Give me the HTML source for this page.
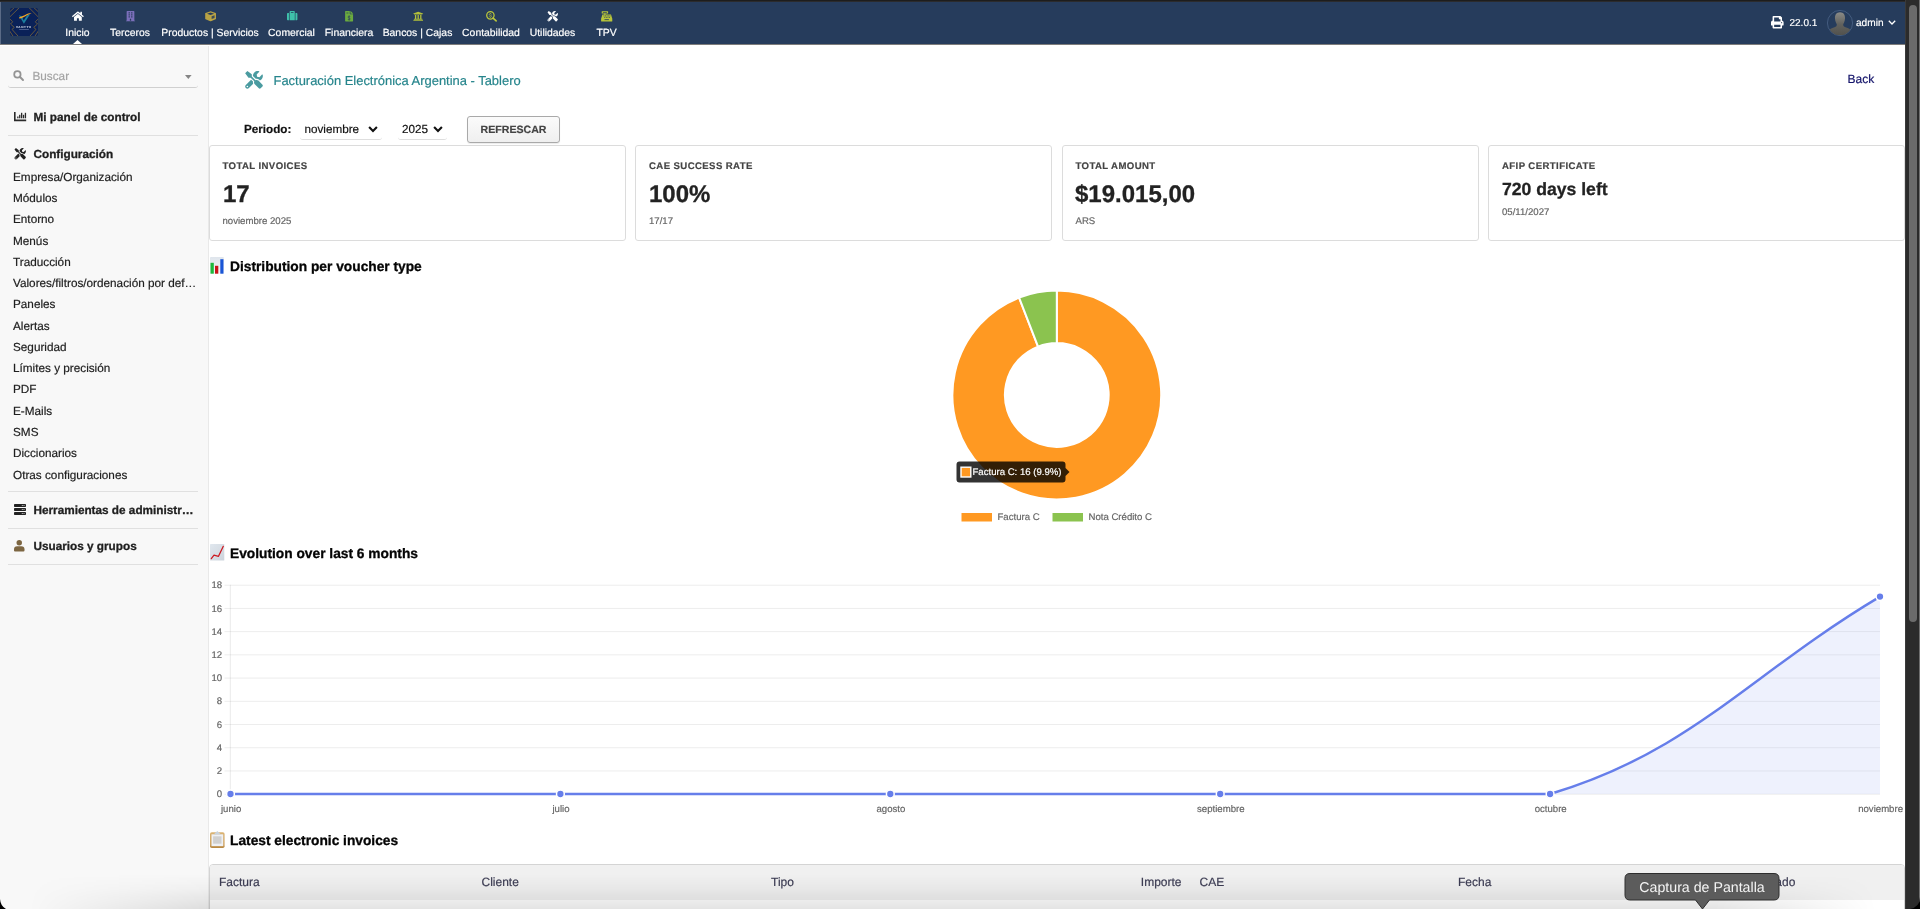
<!DOCTYPE html>
<html lang="es">
<head>
<meta charset="utf-8">
<title>Facturación Electrónica Argentina - Tablero</title>
<style>
*{box-sizing:border-box;margin:0;padding:0}
html,body{width:1920px;height:909px;overflow:hidden;background:#fff}
body{text-rendering:geometricPrecision;font-family:"Liberation Sans",Arial,Helvetica,sans-serif;font-size:11.2px;color:#222;position:relative;-webkit-font-smoothing:antialiased}
.a{position:absolute}
.t{position:absolute;white-space:nowrap;line-height:0;height:0;margin-top:1px;-webkit-text-stroke:.18px}
.h3,.cv,.sh{-webkit-text-stroke:.3px}
.b{font-weight:bold}
.c{transform:translateX(-50%)}
.r{transform:translateX(-100%)}
svg{position:absolute;overflow:visible}
/* top */
#topband{left:0;top:0;width:1920px;height:2px;background:linear-gradient(#1d1d1d 0,#1d1d1d 65%,#4d4f55 100%)}
#nav{left:0;top:2px;width:1905px;height:42px;background:#263c5c}
#navline{left:0;top:44px;width:1905px;height:1px;background:#7d7c7b}
#navedge{left:0;top:2px;width:1px;height:42px;background:#5a6b86}
.nt{color:#fff;font-size:10.4px;top:33px}
/* sidebar */
#side{left:0;top:46px;width:208px;height:863px;background:#f8f8f8}
#sideb{left:208px;top:46px;width:1px;height:863px;background:#e9e9e9}
.sep{position:absolute;left:8px;width:190px;height:1px;background:#e0e0e0}
.sh{font-weight:bold;font-size:11.75px;color:#1f1f1f;left:33.500px}
.si{font-size:11.75px;color:#202020;left:13px}
/* scrollbar */
#sb{left:1905px;top:0;width:15px;height:909px;background:#2b2b2b;border-left:1px solid #3a3a3a}
#sbt{left:1909px;top:5px;width:8px;height:617px;border-radius:4px;background:#6b6b6b}
/* cards */
.card{position:absolute;top:145px;height:96px;background:#fff;border:1px solid #dcdcdc;border-radius:3px}
.cl{font-weight:bold;font-size:9.6px;color:#444;letter-spacing:.4px}
.cv{font-weight:bold;font-size:24px;color:#222}
.cs{font-size:9.6px;color:#666}
.h3{font-weight:bold;font-size:13.75px;color:#050505;left:230px}
.ax{font-size:9.6px;color:#666}
.th{font-size:12px;color:#3d3d54;top:881px}
</style>
</head>
<body>
<div id="wrap" style="position:absolute;left:0;top:0;width:1920px;height:909px;will-change:transform">
<div class="a" id="topband"></div>
<div class="a" id="nav"></div>
<div class="a" id="navline"></div>
<div class="a" id="navedge"></div>
<!-- logo -->
<svg style="left:10px;top:8px" width="28" height="28" viewBox="0 0 28 28">
<defs><clipPath id="lg"><rect x="0" y="0" width="28" height="28" rx="2"/></clipPath></defs>
<g clip-path="url(#lg)">
<rect width="28" height="28" fill="#0a2158"/>
<g stroke="#a8802e" stroke-width="0.700" fill="none" opacity=".85">
<path d="M-1 4.500 L4.900 -1 M-1 9.700 L9.900 -1 M18.400 -1 L29 9.700 M23.300 -1 L29 4.500"/>
<path d="M-1 10.200 L2.700 13.800 L0.500 16 L4.300 19.400 L2 21.400 L8.900 29 M-1 22 L3.600 29"/>
<path d="M29 10.200 L25.300 13.800 L27.500 16 L23.700 19.400 L26 21.400 L19.100 29 M29 22 L24.400 29"/>
</g>
<path d="M8.900 7.300 L13.900 15.800 L20.200 6 L17.200 7.200 L13.700 12.400 L11.800 8.300 Z" fill="#1b7fa0"/>
<path d="M9.500 10.400 C13 10.600 17.500 6.500 21.600 5 C18.500 4.300 14 8.200 9.600 8.900 C9 9.500 9 10 9.500 10.400 Z" fill="#f5a623"/>
<text x="13.800" y="19.500" font-family="Liberation Sans,sans-serif" font-size="3.100" font-weight="bold" letter-spacing=".55" text-anchor="middle" fill="#e8ecf4">VANTYX</text>
<rect x="9.200" y="21" width="9.600" height=".7" fill="#7f8db5" opacity=".8"/>
</g>
</svg>
<!-- nav icons -->
<svg style="left:71.6px;top:10.8px" width="11.8" height="10.4" viewBox="0 0 576 512"><path fill="#fff" d="M280.37 148.26L96 300.11V464a16 16 0 0 0 16 16l112.06-.29a16 16 0 0 0 15.92-16V368a16 16 0 0 1 16-16h64a16 16 0 0 1 16 16v95.64a16 16 0 0 0 16 16.05L464 480a16 16 0 0 0 16-16V300L295.67 148.26a12.19 12.19 0 0 0-15.3 0zM571.6 251.47L488 182.56V44.05a12 12 0 0 0-12-12h-56a12 12 0 0 0-12 12v72.61L318.47 43a48 48 0 0 0-61 0L4.34 251.47a12 12 0 0 0-1.6 16.9l25.5 31A12 12 0 0 0 45.15 301l235.22-193.74a12.19 12.19 0 0 1 15.3 0L530.9 301a12 12 0 0 0 16.9-1.6l25.5-31a12 12 0 0 0-1.7-16.93z"/></svg>
<!-- building -->
<svg style="left:125.8px;top:10.8px" width="9" height="10.4" viewBox="0 0 448 512"><path fill="#7b6fba" d="M436 480h-20V24c0-13.255-10.745-24-24-24H56C42.745 0 32 10.745 32 24v456H12c-6.627 0-12 5.373-12 12v20h448v-20c0-6.627-5.373-12-12-12zM128 76c0-6.627 5.373-12 12-12h40c6.627 0 12 5.373 12 12v40c0 6.627-5.373 12-12 12h-40c-6.627 0-12-5.373-12-12V76zm0 96c0-6.627 5.373-12 12-12h40c6.627 0 12 5.373 12 12v40c0 6.627-5.373 12-12 12h-40c-6.627 0-12-5.373-12-12v-40zm52 148h-40c-6.627 0-12-5.373-12-12v-40c0-6.627 5.373-12 12-12h40c6.627 0 12 5.373 12 12v40c0 6.627-5.373 12-12 12zm76 160h-64v-84c0-6.627 5.373-12 12-12h40c6.627 0 12 5.373 12 12v84zm64-172c0 6.627-5.373 12-12 12h-40c-6.627 0-12-5.373-12-12v-40c0-6.627 5.373-12 12-12h40c6.627 0 12 5.373 12 12v40zm0-96c0 6.627-5.373 12-12 12h-40c-6.627 0-12-5.373-12-12v-40c0-6.627 5.373-12 12-12h40c6.627 0 12 5.373 12 12v40zm0-96c0 6.627-5.373 12-12 12h-40c-6.627 0-12-5.373-12-12V76c0-6.627 5.373-12 12-12h40c6.627 0 12 5.373 12 12v40z"/></svg>
<!-- cube -->
<svg style="left:204.6px;top:10.8px" width="11.2" height="10.4" viewBox="0 0 22 20"><path fill="#b9a344" d="M11 0.3 L21 3.8 Q21.6 4.1 21.6 4.9 V15 Q21.6 15.8 20.9 16.2 L11.6 19.8 Q11 20 10.4 19.8 L1.1 16.2 Q0.4 15.8 0.4 15 V4.9 Q0.4 4.1 1 3.8 Z"/><path fill="#263c5c" d="M11 2.6 L18 5.1 L11 7.6 L4 5.1 Z"/><path fill="#263c5c" d="M13 10.3 L18.8 8.1 V13.4 L13 15.7 Z" opacity=".85"/></svg>
<!-- suitcase -->
<svg style="left:287px;top:11px" width="10.4" height="9.2" viewBox="0 0 512 448"><path fill="#3fc1ab" d="M128 448h256V48c0-26.500-21.500-48-48-48H176c-26.500 0-48 21.500-48 48v400zM192 64h128v32H192V64zM512 144v256c0 26.500-21.500 48-48 48h-48V96h48c26.500 0 48 21.500 48 48zM96 448H48c-26.500 0-48-21.500-48-48V144c0-26.500 21.500-48 48-48h48v352z"/></svg>
<!-- file invoice dollar -->
<svg style="left:345px;top:10.8px" width="8.2" height="10.6" viewBox="0 0 384 512"><path fill="#6aaa3f" d="M224 136V0H24C10.700 0 0 10.700 0 24v464c0 13.300 10.700 24 24 24h336c13.300 0 24-10.700 24-24V160H248c-13.200 0-24-10.800-24-24zM384 121.900v6.100H256V0h6.100c6.400 0 12.500 2.500 17 7l97.900 98c4.500 4.500 7 10.600 7 16.900z"/><path fill="#263c5c" d="M64 72h96v24H64zM64 120h96v24H64z" opacity=".7"/><path d="M245 290 Q240 250 192 250 Q140 250 140 292 Q140 330 192 338 Q246 346 246 386 Q246 428 192 428 Q142 428 136 386 M192 215 V462" fill="none" stroke="#263c5c" stroke-width="34" opacity=".85"/></svg>
<!-- bank -->
<svg style="left:412.8px;top:10.8px" width="10.4" height="10.4" viewBox="0 0 512 512"><path fill="#b3c03a" d="M496 128v16a8 8 0 0 1-8 8h-24v12c0 6.627-5.373 12-12 12H60c-6.627 0-12-5.373-12-12v-12H24a8 8 0 0 1-8-8v-16a8 8 0 0 1 4.941-7.392l232-88a7.996 7.996 0 0 1 6.118 0l232 88A8 8 0 0 1 496 128zm-24 304H40c-13.255 0-24 10.745-24 24v16a8 8 0 0 0 8 8h464a8 8 0 0 0 8-8v-16c0-13.255-10.745-24-24-24zM96 192v192H60c-6.627 0-12 5.373-12 12v20h416v-20c0-6.627-5.373-12-12-12h-36V192h-64v192h-64V192h-64v192h-64V192H96z"/></svg>
<!-- search dollar -->
<svg style="left:485.8px;top:10.7px" width="11" height="10.500" viewBox="0 0 22 21"><circle cx="8.800" cy="8.700" r="7.400" fill="none" stroke="#bcc83a" stroke-width="2.500"/><path d="M14.200 14.200 L20.300 19.700" stroke="#bcc83a" stroke-width="3.200" stroke-linecap="round"/><path d="M11.100 6.900 Q10.900 5.300 8.800 5.300 Q6.500 5.300 6.500 7 Q6.500 8.400 8.800 8.700 Q11.200 9 11.200 10.500 Q11.200 12.200 8.800 12.200 Q6.700 12.200 6.400 10.500 M8.800 4 V5.400 M8.800 12.100 V13.500" fill="none" stroke="#bcc83a" stroke-width="1.250"/></svg>
<!-- tools -->
<svg style="left:547px;top:10.8px" width="11.4" height="10.4" viewBox="0 0 512 512"><path fill="#fff" d="M501.1 395.7L384 278.6c-23.1-23.1-57.6-27.6-85.4-13.9L192 158.1V96L64 0 0 64l96 128h62.1l106.6 106.6c-13.6 27.8-9.2 62.3 13.9 85.4l117.1 117.1c14.6 14.6 38.2 14.6 52.7 0l52.700-52.700c14.500-14.600 14.500-38.200 0-52.700zM331.700 225c28.300 0 54.900 11 74.900 31l19.400 19.400c15.800-6.900 30.800-16.500 43.800-29.500 37.100-37.100 49.700-89.300 37.900-136.700-2.200-9-13.500-12.100-20.100-5.500l-74.400 74.400-67.900-11.300L334 98.900l74.400-74.400c6.600-6.600 3.400-17.900-5.700-20.200-47.400-11.700-99.600.900-136.600 37.900-28.500 28.500-41.900 66.100-41.200 103.600l82.100 82.100c8.100-1.900 16.500-2.900 24.700-2.900zm-103.900 82l-56.700-56.700L18.700 402.800c-25 25-25 65.500 0 90.500s65.500 25 90.500 0l123.600-123.600c-7.600-19.900-9.900-41.600-5-62.700zM64 472c-13.200 0-24-10.800-24-24 0-13.300 10.700-24 24-24s24 10.700 24 24c0 13.200-10.700 24-24 24z"/></svg>
<!-- cash register -->
<svg style="left:601.2px;top:10.8px" width="11.400" height="10.600" viewBox="0 0 11.400 10.600"><g fill="#b8c53a"><rect x="0.700" y="0.200" width="6.400" height="2.400" rx=".4"/><rect x="3" y="2.500" width="1.700" height="1.200"/><path d="M1.400 3.500 H10 L11.300 7.700 V9.900 Q11.300 10.600 10.600 10.600 H0.800 Q0.100 10.600 0.100 9.900 V7.700 Z"/></g><g fill="#263c5c"><rect x="1.900" y="1" width="4" height=".7"/><rect x="2.500" y="4.500" width=".9" height=".8"/><rect x="4.100" y="4.500" width=".9" height=".8"/><rect x="5.700" y="4.500" width=".9" height=".8"/><rect x="7.300" y="4.500" width=".9" height=".8"/><rect x="8.700" y="4.500" width=".7" height=".8"/><rect x="3.300" y="5.900" width=".9" height=".8"/><rect x="4.900" y="5.900" width=".9" height=".8"/><rect x="6.500" y="5.900" width=".9" height=".8"/><rect x="8.100" y="5.900" width=".9" height=".8"/><rect x="3.500" y="8.300" width="4.400" height=".8"/></g></svg>
<!-- nav labels -->
<div class="t nt c" style="left:77.5px">Inicio</div>
<div class="t nt c" style="left:130px">Terceros</div>
<div class="t nt c" style="left:210px">Productos | Servicios</div>
<div class="t nt c" style="left:291.5px">Comercial</div>
<div class="t nt c" style="left:349px">Financiera</div>
<div class="t nt c" style="left:417.5px">Bancos | Cajas</div>
<div class="t nt c" style="left:491px">Contabilidad</div>
<div class="t nt c" style="left:552.5px">Utilidades</div>
<div class="t nt c" style="left:606.5px">TPV</div>
<!-- active caret -->
<svg style="left:72.5px;top:40px" width="9" height="4" viewBox="0 0 9 4"><path d="M0 4 L4.5 0 L9 4 Z" fill="#fff"/></svg>
<!-- right side -->
<svg style="left:1770.8px;top:16px" width="12.6" height="12.6" viewBox="0 0 512 512"><path fill="#fff" d="M448 192V77.250c0-8.490-3.370-16.620-9.370-22.630L393.370 9.370c-6-6-14.140-9.370-22.630-9.370H96C78.330 0 64 14.330 64 32v160c-35.350 0-64 28.650-64 64v112c0 8.840 7.160 16 16 16h48v96c0 17.670 14.330 32 32 32h320c17.670 0 32-14.330 32-32v-96h48c8.840 0 16-7.160 16-16V256c0-35.350-28.650-64-64-64zm-64 256H128v-96h256v96zm0-224H128V64h192v48c0 8.840 7.160 16 16 16h48v96zm48 72c-13.250 0-24-10.750-24-24 0-13.260 10.750-24 24-24s24 10.740 24 24c0 13.250-10.750 24-24 24z"/></svg>
<div class="t" style="left:1789.5px;top:22.500px;font-size:10px;color:#fff">22.0.1</div>
<svg style="left:1826.5px;top:9.5px" width="26" height="26" viewBox="0 0 26 26">
<defs><clipPath id="av"><circle cx="13" cy="13" r="12.2"/></clipPath><linearGradient id="avg" x1="0" y1="0" x2="0" y2="1"><stop offset="0" stop-color="#8b8b87"/><stop offset=".5" stop-color="#62625e"/><stop offset="1" stop-color="#50504c"/></linearGradient></defs>
<circle cx="13" cy="13" r="12.6" fill="#263c5c" stroke="#4a6388" stroke-width=".8"/>
<g clip-path="url(#av)"><path d="M13 2.2 C16.6 2.2 18.3 5 18 8.600 C17.800 11.400 16.900 13.200 16.200 14.200 C16.200 16 16.800 16.600 18.500 17.200 C21.500 18.200 23.600 18.800 23.800 21.400 L23.800 26 L2.200 26 L2.200 21.400 C2.400 18.800 4.500 18.200 7.500 17.200 C9.200 16.600 9.800 16 9.800 14.200 C9.100 13.200 8.200 11.400 8 8.600 C7.700 5 9.400 2.200 13 2.200 Z" fill="url(#avg)"/></g>
</svg>
<div class="t" style="left:1856px;top:22.500px;font-size:10.100px;color:#fff">admin</div>
<svg style="left:1888px;top:20px" width="8" height="5" viewBox="0 0 8 5"><path d="M0.800 0.800 L4 4 L7.200 0.800" fill="none" stroke="#fff" stroke-width="1.3"/></svg>
<div class="a" id="side"></div>
<div class="a" id="sideb"></div>
<!-- search -->
<svg style="left:12.5px;top:69.5px" width="11" height="11" viewBox="0 0 22 22"><circle cx="8.800" cy="8.800" r="6.400" fill="none" stroke="#949494" stroke-width="3.500"/><path d="M14 14 L20 20" stroke="#949494" stroke-width="3.900" stroke-linecap="round"/></svg>
<div class="t" style="left:32.500px;top:76px;font-size:11.750px;color:#a3a3a3">Buscar</div>
<svg style="left:185.400px;top:74.600px" width="6.600" height="4" viewBox="0 0 6.600 4"><path d="M0 0 H6.600 L3.300 4 Z" fill="#858585"/></svg>
<div class="a" style="left:8px;top:70px;width:190px;height:18px;border-bottom:1px solid #d0d0d0;border-radius:0 0 3px 3px"></div>
<!-- dashboard -->
<svg style="left:14px;top:111.800px" width="12.200" height="9.200" viewBox="0 0 24.400 18.400"><g fill="#2a2a2a"><path d="M0 0 H3.200 V15.200 H24.400 V18.400 H0 Z"/><rect x="6.400" y="9" width="2.600" height="3.600"/><rect x="10.200" y="5.600" width="2.600" height="7"/><rect x="14" y="1.600" width="2.600" height="11"/><rect x="17.800" y="5.600" width="2.600" height="7"/><rect x="21.600" y="1.600" width="2.600" height="11"/></g></svg>
<div class="t sh" style="top:117px">Mi panel de control</div>
<div class="sep" style="top:135px"></div>
<!-- config -->
<svg style="left:14px;top:148px" width="12.400" height="11.400" viewBox="0 0 512 512"><path fill="#222" d="M501.1 395.7L384 278.6c-23.1-23.1-57.6-27.6-85.4-13.9L192 158.1V96L64 0 0 64l96 128h62.1l106.6 106.6c-13.6 27.8-9.2 62.3 13.9 85.4l117.1 117.1c14.6 14.6 38.2 14.6 52.7 0l52.700-52.700c14.500-14.600 14.500-38.200 0-52.700zM331.700 225c28.300 0 54.900 11 74.900 31l19.400 19.400c15.800-6.900 30.800-16.500 43.800-29.500 37.100-37.100 49.700-89.300 37.900-136.700-2.200-9-13.500-12.100-20.100-5.500l-74.400 74.400-67.900-11.300L334 98.900l74.400-74.400c6.600-6.600 3.400-17.900-5.700-20.200-47.400-11.700-99.600.900-136.600 37.900-28.500 28.500-41.900 66.100-41.200 103.600l82.100 82.100c8.100-1.900 16.500-2.900 24.700-2.900zm-103.900 82l-56.700-56.700L18.700 402.800c-25 25-25 65.500 0 90.500s65.500 25 90.500 0l123.600-123.600c-7.600-19.900-9.900-41.600-5-62.700zM64 472c-13.200 0-24-10.800-24-24 0-13.300 10.700-24 24-24s24 10.700 24 24c0 13.200-10.700 24-24 24z"/></svg>
<div class="t sh" style="top:154px">Configuración</div>
<div class="t si" style="top:177px">Empresa/Organización</div>
<div class="t si" style="top:198px">Módulos</div>
<div class="t si" style="top:219px">Entorno</div>
<div class="t si" style="top:241px">Menús</div>
<div class="t si" style="top:262px">Traducción</div>
<div class="t si" style="top:283px">Valores/filtros/ordenación por def…</div>
<div class="t si" style="top:304px">Paneles</div>
<div class="t si" style="top:326px">Alertas</div>
<div class="t si" style="top:347px">Seguridad</div>
<div class="t si" style="top:368px">Límites y precisión</div>
<div class="t si" style="top:389px">PDF</div>
<div class="t si" style="top:411px">E-Mails</div>
<div class="t si" style="top:432px">SMS</div>
<div class="t si" style="top:453px">Diccionarios</div>
<div class="t si" style="top:475px">Otras configuraciones</div>
<div class="sep" style="top:491px"></div>
<!-- admin tools -->
<svg style="left:14.200px;top:503.600px" width="12" height="11" viewBox="0 0 24 22"><g fill="#222"><rect x="0" y="0" width="24" height="6" rx="1.500"/><rect x="0" y="8" width="24" height="6" rx="1.500"/><rect x="0" y="16" width="24" height="6" rx="1.500"/></g><g fill="#f8f8f8"><circle cx="20" cy="3" r="1"/><circle cx="16.500" cy="3" r="1"/><circle cx="20" cy="11" r="1"/><circle cx="16.500" cy="11" r="1"/><circle cx="20" cy="19" r="1"/><circle cx="16.500" cy="19" r="1"/></g></svg>
<div class="t sh" style="top:510px">Herramientas de administr…</div>
<div class="sep" style="top:528px"></div>
<!-- users -->
<svg style="left:13.900px;top:540px" width="10.500" height="11.500" viewBox="0 0 21 23"><g fill="#7d6642"><circle cx="10.500" cy="5.500" r="5.500"/><path d="M2 23 Q0 23 0 21 V18.500 Q0 12.500 6.500 12.500 H14.500 Q21 12.500 21 18.500 V21 Q21 23 19 23 Z"/></g></svg>
<div class="t sh" style="top:546px">Usuarios y grupos</div>
<div class="sep" style="top:564px"></div>
<!-- title -->
<svg style="left:245px;top:70.500px" width="18" height="17.700" viewBox="0 0 512 512"><path fill="#4a9ba0" d="M501.1 395.7L384 278.6c-23.1-23.1-57.6-27.6-85.4-13.9L192 158.1V96L64 0 0 64l96 128h62.1l106.6 106.6c-13.6 27.8-9.2 62.3 13.9 85.4l117.1 117.1c14.6 14.6 38.2 14.6 52.7 0l52.700-52.700c14.500-14.600 14.500-38.200 0-52.700zM331.700 225c28.300 0 54.900 11 74.900 31l19.400 19.400c15.800-6.900 30.800-16.500 43.800-29.500 37.100-37.100 49.700-89.300 37.900-136.700-2.200-9-13.500-12.100-20.100-5.500l-74.400 74.400-67.900-11.300L334 98.900l74.400-74.400c6.600-6.600 3.400-17.900-5.700-20.200-47.400-11.700-99.600.900-136.600 37.900-28.500 28.500-41.900 66.100-41.200 103.600l82.100 82.100c8.100-1.900 16.500-2.900 24.700-2.900zm-103.900 82l-56.700-56.700L18.700 402.800c-25 25-25 65.500 0 90.500s65.500 25 90.500 0l123.600-123.600c-7.600-19.900-9.900-41.600-5-62.700zM64 472c-13.200 0-24-10.800-24-24 0-13.300 10.700-24 24-24s24 10.700 24 24c0 13.200-10.700 24-24 24z"/></svg>
<div class="t" style="left:273.500px;top:80px;font-size:12.950px;color:#26858c">Facturación Electrónica Argentina - Tablero</div>
<div class="t" style="left:1847.500px;top:78px;font-size:12px;color:#14146a">Back</div>
<!-- period -->
<div class="t b" style="left:244px;top:128px;transform:translateY(.5px);font-size:11.700px;color:#111">Periodo:</div>
<div class="t" style="left:304.500px;top:128px;transform:translateY(.6px);font-size:11.700px;color:#111">noviembre</div>
<svg style="left:368.300px;top:125.800px" width="10" height="6.500" viewBox="0 0 10 6.500"><path d="M1.100 1 L5 5 L8.900 1" fill="none" stroke="#111" stroke-width="2.100"/></svg>
<div class="a" style="left:300px;top:119px;width:82px;height:20.500px;border-bottom:1px solid #dedede;border-radius:0 0 3px 3px"></div>
<div class="t" style="left:402px;top:128px;transform:translateY(.6px);font-size:11.700px;color:#111">2025</div>
<svg style="left:433.300px;top:125.800px" width="10" height="6.500" viewBox="0 0 10 6.500"><path d="M1.100 1 L5 5 L8.900 1" fill="none" stroke="#111" stroke-width="2.100"/></svg>
<div class="a" style="left:398px;top:119px;width:49px;height:20.500px;border-bottom:1px solid #dedede;border-radius:0 0 3px 3px"></div>
<div class="a" style="left:467px;top:116px;width:93px;height:27px;border:1px solid #a9a9a9;border-radius:3px;background:linear-gradient(#fbfbfb,#efefef);box-shadow:0 1px 1px rgba(0,0,0,.08)"></div>
<div class="t b" style="left:513.500px;top:128px;transform:translate(-50%,.7px);font-size:10.600px;color:#444">REFRESCAR</div>
<!-- cards -->
<div class="card" style="left:209px;width:417px"></div>
<div class="card" style="left:635px;width:417px"></div>
<div class="card" style="left:1062px;width:417px"></div>
<div class="card" style="left:1488px;width:417px"></div>
<div class="t cl" style="left:222.500px;top:165.500px">TOTAL INVOICES</div>
<div class="t cv" style="left:223px;top:193.500px">17</div>
<div class="t cs" style="left:222.500px;top:220.500px">noviembre 2025</div>
<div class="t cl" style="left:649px;top:165.500px">CAE SUCCESS RATE</div>
<div class="t cv" style="left:649px;top:193.500px">100%</div>
<div class="t cs" style="left:649px;top:220.500px">17/17</div>
<div class="t cl" style="left:1075.500px;top:165.500px">TOTAL AMOUNT</div>
<div class="t cv" style="left:1075px;top:193.500px">$19.015,00</div>
<div class="t cs" style="left:1075.500px;top:220.500px">ARS</div>
<div class="t cl" style="left:1502px;top:165.500px">AFIP CERTIFICATE</div>
<div class="t cv" style="left:1502px;top:188px;font-size:17.600px">720 days left</div>
<div class="t cs" style="left:1502px;top:211.500px">05/11/2027</div>
<!-- headings -->
<svg style="left:210.100px;top:257.300px" width="13.800" height="16.700" viewBox="0 0 13.800 16.700"><defs><linearGradient id="e1" x1="0" y1="0" x2="0" y2="1"><stop offset="0" stop-color="#dfe5ec"/><stop offset="1" stop-color="#f4f6f8"/></linearGradient></defs><rect x="0" y="0" width="13.800" height="16.700" rx=".8" fill="url(#e1)"/><rect x=".5" y="5.800" width="3.300" height="10.900" fill="#1db83c"/><rect x="5" y="8.800" width="3.300" height="7.900" fill="#c9141a"/><rect x="10.300" y="2.200" width="3.200" height="14.500" fill="#1a55d6"/></svg>
<div class="t h3" style="top:266px">Distribution per voucher type</div>
<svg style="left:210.200px;top:544.100px" width="14.300" height="16.600" viewBox="0 0 14.300 16.600"><defs><linearGradient id="e2" x1="0" y1="0" x2="1" y2="1"><stop offset="0" stop-color="#e0e7ee"/><stop offset="1" stop-color="#cdd4dc"/></linearGradient></defs><rect x="0" y="0" width="14.300" height="16.600" rx=".6" fill="url(#e2)"/><path d="M1.300 14.700 L4 11.200 L8.500 12.300 L13.300 2.300" fill="none" stroke="#cc1820" stroke-width="1.250" stroke-linejoin="round" stroke-linecap="round"/></svg>
<div class="t h3" style="top:553px">Evolution over last 6 months</div>
<svg style="left:210.200px;top:831px" width="14.600" height="17" viewBox="0 0 14.600 17"><defs><linearGradient id="e3" x1="0" y1="0" x2="0" y2="1"><stop offset="0" stop-color="#dab373"/><stop offset=".8" stop-color="#cfa463"/><stop offset="1" stop-color="#b4843f"/></linearGradient></defs><rect x="0" y="1.300" width="14.600" height="15.700" rx="1.800" fill="url(#e3)"/><rect x="1.500" y="3.300" width="11.700" height="11.800" fill="#eef0f4"/><rect x="3.100" y="5.300" width="8.400" height="7.400" fill="#d0d0d0"/><path d="M3.600 3.600 L5.200 1.900 L7.300 0 L9.400 1.900 L11 3.600 Z" fill="#c9d3de"/></svg>
<div class="t h3" style="top:840px">Latest electronic invoices</div>
<!-- donut -->
<svg style="left:0;top:0" width="1905" height="909" viewBox="0 0 1905 909">
<path d="M1056.80 290.60 A104.4 104.4 0 1 1 1019.09 297.65 L1038.05 346.60 A51.9 51.9 0 1 0 1056.80 343.10 Z" fill="#ff9922" stroke="#fff" stroke-width="2" stroke-linejoin="round"/>
<path d="M1019.09 297.65 A104.4 104.4 0 0 1 1056.80 290.60 L1056.80 343.10 A51.9 51.9 0 0 0 1038.05 346.60 Z" fill="#8bc34f" stroke="#fff" stroke-width="2" stroke-linejoin="round"/>
<rect x="961.5" y="513" width="30.500" height="8.500" fill="#ff9922"/>
<rect x="1052.500" y="513" width="30.500" height="8.500" fill="#8bc34f"/>
<path d="M959.500 461.500 H1062.500 Q1065.500 461.500 1065.500 464.500 V468 L1069.500 472 L1065.500 476 V479.500 Q1065.500 482.500 1062.500 482.500 H959.500 Q956.500 482.500 956.500 479.500 V464.500 Q956.500 461.500 959.500 461.500 Z" fill="rgba(0,0,0,0.8)"/>
<rect x="961" y="467.200" width="9.800" height="9.800" fill="#ff9922" stroke="#fff" stroke-width="1.400"/>
<path d="M224.500 585.2 H1880.0" stroke="rgba(0,0,0,0.075)" stroke-width="1"/>
<path d="M224.500 608.42 H1880.0" stroke="rgba(0,0,0,0.075)" stroke-width="1"/>
<path d="M224.500 631.64 H1880.0" stroke="rgba(0,0,0,0.075)" stroke-width="1"/>
<path d="M224.500 654.87 H1880.0" stroke="rgba(0,0,0,0.075)" stroke-width="1"/>
<path d="M224.500 678.09 H1880.0" stroke="rgba(0,0,0,0.075)" stroke-width="1"/>
<path d="M224.500 701.31 H1880.0" stroke="rgba(0,0,0,0.075)" stroke-width="1"/>
<path d="M224.500 724.53 H1880.0" stroke="rgba(0,0,0,0.075)" stroke-width="1"/>
<path d="M224.500 747.76 H1880.0" stroke="rgba(0,0,0,0.075)" stroke-width="1"/>
<path d="M224.500 770.98 H1880.0" stroke="rgba(0,0,0,0.075)" stroke-width="1"/>
<path d="M224.500 794.2 H1880.0" stroke="rgba(0,0,0,0.075)" stroke-width="1"/>
<path d="M230.3 584.7 V794.7" stroke="rgba(0,0,0,0.085)" stroke-width="1"/>
<path d="M1550.1 794.0 C1692 751.600 1748 675.4 1880.0 596.6 V794.0 Z" fill="rgba(102,126,234,0.11)"/>
<path d="M230.5 794.0 H1550.1 C1692 751.600 1748 675.4 1880.0 596.6" fill="none" stroke="#667eea" stroke-width="2.400" stroke-linecap="round"/>
<circle cx="230.5" cy="794.0" r="3.900" fill="#667eea" stroke="#fff" stroke-width="1.500"/>
<circle cx="560.4" cy="794.0" r="3.900" fill="#667eea" stroke="#fff" stroke-width="1.500"/>
<circle cx="890.3" cy="794.0" r="3.900" fill="#667eea" stroke="#fff" stroke-width="1.500"/>
<circle cx="1220.2" cy="794.0" r="3.900" fill="#667eea" stroke="#fff" stroke-width="1.500"/>
<circle cx="1550.1" cy="794.0" r="3.900" fill="#667eea" stroke="#fff" stroke-width="1.500"/>
<circle cx="1880.0" cy="596.6" r="3.900" fill="#667eea" stroke="#fff" stroke-width="1.500"/>
</svg>
<div class="t" style="left:997.500px;top:517px;font-size:9.600px;color:#666">Factura C</div>
<div class="t" style="left:1088.500px;top:517px;font-size:9.600px;color:#666">Nota Crédito C</div>
<div class="t" style="left:972.500px;top:472px;font-size:9.600px;color:#fff">Factura C: 16 (9.9%)</div>
<div class="t ax r" style="left:222.100px;top:585.3px">18</div>
<div class="t ax r" style="left:222.100px;top:608.5px">16</div>
<div class="t ax r" style="left:222.100px;top:631.7px">14</div>
<div class="t ax r" style="left:222.100px;top:655.0px">12</div>
<div class="t ax r" style="left:222.100px;top:678.2px">10</div>
<div class="t ax r" style="left:222.100px;top:701.4px">8</div>
<div class="t ax r" style="left:222.100px;top:724.6px">6</div>
<div class="t ax r" style="left:222.100px;top:747.9px">4</div>
<div class="t ax r" style="left:222.100px;top:771.1px">2</div>
<div class="t ax r" style="left:222.100px;top:794.3px">0</div>
<div class="t ax c" style="left:231.1px;top:808.500px">junio</div>
<div class="t ax c" style="left:561.0px;top:808.500px">julio</div>
<div class="t ax c" style="left:890.9px;top:808.500px">agosto</div>
<div class="t ax c" style="left:1220.8px;top:808.500px">septiembre</div>
<div class="t ax c" style="left:1550.7px;top:808.500px">octubre</div>
<div class="t ax c" style="left:1880.6px;top:808.500px">noviembre</div>
<!-- table -->
<div class="a" style="left:209px;top:864px;width:1695.500px;height:60px;border:1px solid #d4d4d4;border-radius:4px 4px 0 0;background:#fff;overflow:hidden"><div class="a" style="left:0;top:0;width:1696px;height:35px;background:#f0f0f0"></div></div>
<div class="t th" style="left:219px">Factura</div>
<div class="t th" style="left:481.500px">Cliente</div>
<div class="t th" style="left:771px">Tipo</div>
<div class="t th r" style="left:1181.500px">Importe</div>
<div class="t th" style="left:1199.500px">CAE</div>
<div class="t th" style="left:1458px">Fecha</div>
<div class="t th" style="left:1758px">Estado</div>
<!-- bottom window shadow -->
<div class="a" style="left:0;top:874px;width:1905px;height:35px;background:linear-gradient(rgba(0,0,0,0),rgba(0,0,0,.03) 40%,rgba(0,0,0,.075) 75%,rgba(0,0,0,.11));-webkit-mask-image:linear-gradient(to right,transparent 1.500%,#000 11%,#000 90%,transparent 98.500%);mask-image:linear-gradient(to right,transparent 1.500%,#000 11%,#000 90%,transparent 98.500%)"></div>
<!-- mac tooltip -->
<svg style="left:1620px;top:868px" width="166" height="41" viewBox="0 0 166 41"><path d="M10 5.500 H154 Q159 5.500 159 10.500 V27 Q159 32 154 32 H89.500 L82.500 41 L75.500 32 H10 Q5 32 5 27 V10.500 Q5 5.500 10 5.500 Z" fill="#5c5c5c" stroke="#2e2e2e" stroke-width="1"/></svg>
<div class="t c" style="left:1702px;top:887px;font-size:14.200px;color:#f4f4f4;-webkit-text-stroke:0">Captura de Pantalla</div>
<!-- scrollbar -->
<div class="a" id="sb"></div>
<div class="a" id="sbt"></div>
<!-- window corner -->
<svg style="left:0;top:899px" width="10" height="10" viewBox="0 0 10 10"><path d="M0 0 Q0.500 7 6 10 H0 Z" fill="#000"/></svg>
<div class="a" style="left:1919px;top:0;width:1px;height:909px;background:#6f6f6f"></div>
<svg style="left:1908px;top:897px" width="12" height="12" viewBox="0 0 12 12"><path d="M12 0 Q12 10 2 12 H12 Z" fill="#000"/></svg>
</div>
</body>
</html>
